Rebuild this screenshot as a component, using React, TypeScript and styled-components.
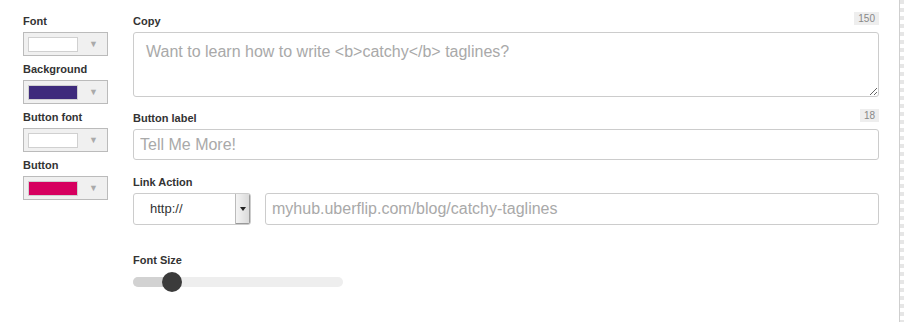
import { useState } from 'react';
import styled, { createGlobalStyle } from 'styled-components';

const GlobalStyle = createGlobalStyle`
    html, body {
        margin: 0;
        padding: 0;
        background: #fff;
    }
    body {
        font-family: "Liberation Sans", Arial, Helvetica, sans-serif;
        color: #333;
    }
`;

const Page = styled.div`
    width: 904px;
    height: 322px;
    display: flex;
    box-sizing: border-box;
`;

const Panel = styled.div`
    flex: 1;
    display: flex;
    gap: 25px;
    padding: 14px 20px 0 23px;
    border-right: 1px solid #cfcfcf;
`;

const DashedEdge = styled.div`
    width: 4px;
    background: repeating-linear-gradient(
        to bottom,
        #e6e6e6 0,
        #e6e6e6 4px,
        #fff 4px,
        #fff 8px
    );
`;

const ColorColumn = styled.div`
    width: 85px;
    display: flex;
    flex-direction: column;
    gap: 6px;
`;

const ColorGroup = styled.div`
    display: flex;
    flex-direction: column;
    gap: 4px;
`;

const Label = styled.label`
    display: block;
    font-size: 11px;
    line-height: 14px;
    font-weight: bold;
    color: #333;
`;

const SwatchPicker = styled.div`
    height: 24px;
    box-sizing: border-box;
    border: 1px solid #bbb;
    background: #f0f0f0;
    display: flex;
    align-items: center;
    padding: 0 0 0 4px;
`;

const Swatch = styled.div<{ $color: string }>`
    width: 50px;
    height: 15px;
    box-sizing: border-box;
    border: 1px solid #d0d0d0;
    background: ${p => p.$color};
`;

const PickerArrow = styled.span`
    flex: 1;
    text-align: center;
    font-size: 9px;
    color: #aaa;
    padding-left: 2px;
`;

const FieldColumn = styled.div`
    flex: 1;
    display: flex;
    flex-direction: column;
`;

const Field = styled.div<{ $gap?: number }>`
    margin-bottom: ${p => p.$gap ?? 10}px;
`;

const FieldHeader = styled.div`
    display: flex;
    justify-content: space-between;
    align-items: flex-start;
    height: 18px;
    margin-top: -4px;
    margin-bottom: 4px;
    ${Label} {
        margin-top: 4px;
    }
`;

const Counter = styled.span`
    margin-top: 2px;
    height: 13px;
    line-height: 13px;
    padding: 0 4px;
    font-size: 10px;
    color: #888;
    background: #eee;
`;

const TextArea = styled.textarea`
    display: block;
    width: 100%;
    height: 65px;
    box-sizing: border-box;
    border: 1px solid #ccc;
    border-radius: 3px;
    padding: 9px 12px;
    font-family: inherit;
    font-size: 16px;
    line-height: 19px;
    color: #333;
    resize: vertical;
    outline: none;
    &::placeholder {
        color: #a9a9a9;
    }
`;

const TextInput = styled.input<{ $height?: number }>`
    display: block;
    width: 100%;
    height: ${p => p.$height ?? 31}px;
    box-sizing: border-box;
    border: 1px solid #ccc;
    border-radius: 3px;
    padding: 0 6px;
    font-family: inherit;
    font-size: 16px;
    color: #333;
    outline: none;
    &::placeholder {
        color: #a9a9a9;
    }
`;

const LinkRow = styled.div`
    display: flex;
    gap: 14px;
`;

const ProtocolSelect = styled.div`
    width: 118px;
    height: 32px;
    flex: none;
    box-sizing: border-box;
    border: 1px solid #ccc;
    border-radius: 3px;
    display: flex;
    overflow: hidden;
`;

const SelectValue = styled.span`
    flex: 1;
    padding-left: 16px;
    line-height: 30px;
    font-size: 13px;
    color: #333;
`;

const SelectButton = styled.span`
    width: 14px;
    display: flex;
    align-items: center;
    justify-content: center;
    border-left: 1px solid #bbb;
    background: linear-gradient(to right, #f4f4f4, #d8d8d8);
    box-shadow: inset -1px -1px 0 #999;
    &::after {
        content: '';
        border-left: 3px solid transparent;
        border-right: 3px solid transparent;
        border-top: 4px solid #222;
    }
`;

const SliderTrack = styled.div`
    position: relative;
    width: 210px;
    height: 10px;
    margin-top: 10px;
    border-radius: 5px;
    background: #eee;
`;

const SliderFill = styled.div`
    height: 100%;
    border-radius: 5px 0 0 5px;
    background: #d2d2d2;
`;

const SliderThumb = styled.div`
    position: absolute;
    top: 50%;
    width: 20px;
    height: 20px;
    margin: -10px 0 0 -10px;
    border-radius: 50%;
    background: #3b3b3b;
`;

const colors = [
    { label: 'Font', color: '#ffffff' },
    { label: 'Background', color: '#3e2b7c' },
    { label: 'Button font', color: '#ffffff' },
    { label: 'Button', color: '#d6005f' },
];

export default function App() {
    const [fontSize] = useState(0.185);
    const fillWidth = `${fontSize * 100}%`;

    return <>
        <GlobalStyle />
        <Page>
            <Panel>
                <ColorColumn>
                    {colors.map(c => (
                        <ColorGroup key={c.label}>
                            <Label>{c.label}</Label>
                            <SwatchPicker>
                                <Swatch $color={c.color} />
                                <PickerArrow>▼</PickerArrow>
                            </SwatchPicker>
                        </ColorGroup>
                    ))}
                </ColorColumn>
                <FieldColumn>
                    <Field $gap={14}>
                        <FieldHeader>
                            <Label>Copy</Label>
                            <Counter>150</Counter>
                        </FieldHeader>
                        <TextArea placeholder="Want to learn how to write <b>catchy</b> taglines?" />
                    </Field>
                    <Field $gap={15}>
                        <FieldHeader>
                            <Label>Button label</Label>
                            <Counter>18</Counter>
                        </FieldHeader>
                        <TextInput placeholder="Tell Me More!" />
                    </Field>
                    <Field $gap={28}>
                        <FieldHeader>
                            <Label>Link Action</Label>
                        </FieldHeader>
                        <LinkRow>
                            <ProtocolSelect>
                                <SelectValue>http://</SelectValue>
                                <SelectButton />
                            </ProtocolSelect>
                            <TextInput $height={32} placeholder="myhub.uberflip.com/blog/catchy-taglines" />
                        </LinkRow>
                    </Field>
                    <Field>
                        <FieldHeader>
                            <Label>Font Size</Label>
                        </FieldHeader>
                        <SliderTrack>
                            <SliderFill style={{ width: fillWidth }} />
                            <SliderThumb style={{ left: fillWidth }} />
                        </SliderTrack>
                    </Field>
                </FieldColumn>
            </Panel>
            <DashedEdge />
        </Page>
    </>;
}
